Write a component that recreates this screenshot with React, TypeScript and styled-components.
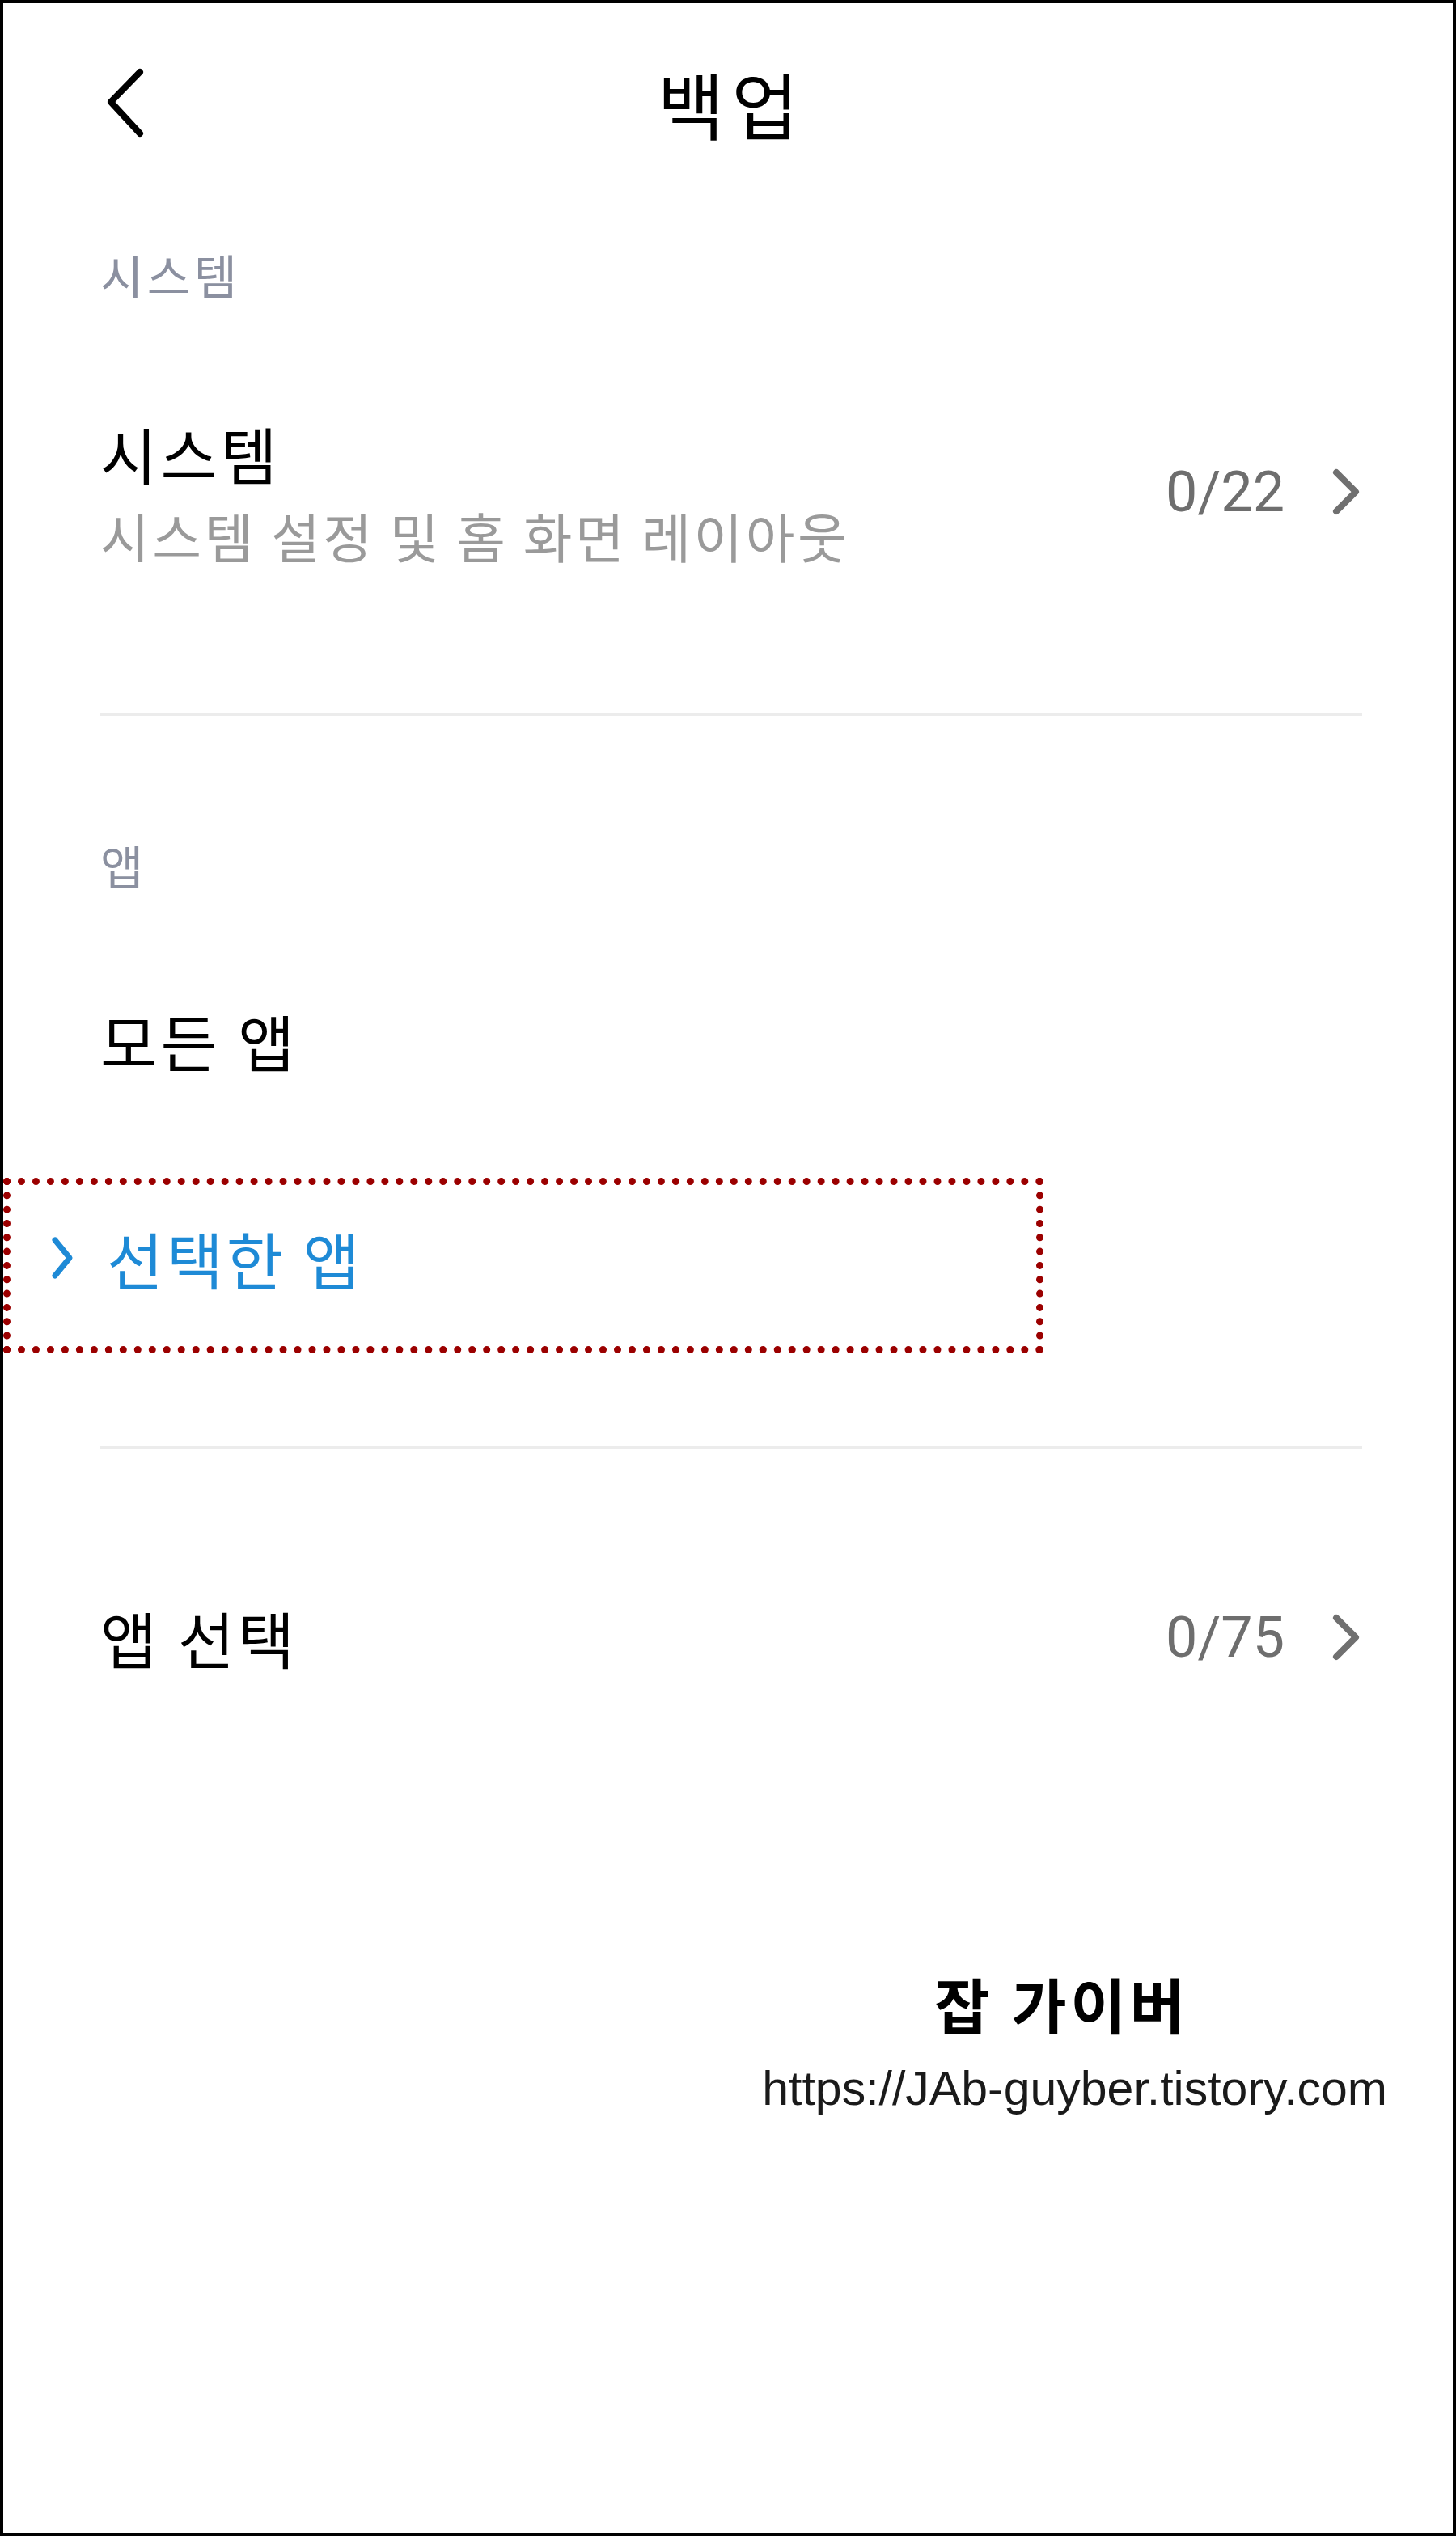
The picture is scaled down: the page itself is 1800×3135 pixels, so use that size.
import React from 'react'
import styled, {createGlobalStyle} from 'styled-components'

const GlobalStyle = createGlobalStyle`
  html, body {
    margin: 0;
    padding: 0;
    background: #fff;
  }
  * {
    box-sizing: border-box;
  }
`

const KR = `"Noto Sans CJK KR", "Noto Sans", sans-serif`

type Entry = { title: string, subtitle?: string, count?: string }

const systemItems: Entry[] = [
    { title: "시스템", subtitle: "시스템 설정 및 홈 화면 레이아웃", count: "0/22" },
]

const BackIcon = () => (
    <svg width="56" height="92" viewBox="0 0 56 92">
        <path d="M46 8 L10 45 L46 84" fill="none" stroke="#000" strokeWidth="8" strokeLinecap="round" strokeLinejoin="round"/>
    </svg>
)

const ChevronIcon = ({ color = "#707070", small = false }: { color?: string, small?: boolean }) => (
    small ? (
        <svg width="30" height="56" viewBox="0 0 30 56">
            <path d="M6 6 L24 28 L6 50" fill="none" stroke={color} strokeWidth="7" strokeLinecap="round" strokeLinejoin="round"/>
        </svg>
    ) : (
        <svg width="40" height="64" viewBox="0 0 40 64">
            <path d="M8 8 L32 32 L8 56" fill="none" stroke={color} strokeWidth="8" strokeLinecap="round" strokeLinejoin="round"/>
        </svg>
    )
)

const CountChevron = ({ count }: { count: string }) => (
    <Trailing>
        <Count>{count}</Count>
        <ChevronIcon/>
    </Trailing>
)

export default function App() {
    return (
        <>
            <GlobalStyle/>
            <Frame>
                <Header>
                    <BackButton type="button" aria-label="뒤로">
                        <BackIcon/>
                    </BackButton>
                    <Title>백업</Title>
                    <span/>
                </Header>

                <Content>
                    <SectionLabel $top={60}>시스템</SectionLabel>
                    {systemItems.map(item => (
                        <Row key={item.title} $top={154}>
                            <TextColumn>
                                <ItemTitle>{item.title}</ItemTitle>
                                <ItemSubtitle>{item.subtitle}</ItemSubtitle>
                            </TextColumn>
                            {item.count && <CountChevron count={item.count}/>}
                        </Row>
                    ))}
                    <Divider $top={188}/>

                    <SectionLabel $top={155}>앱</SectionLabel>
                    <Row $top={150}>
                        <ItemTitle>모든 앱</ItemTitle>
                    </Row>
                    <Highlight>
                        <ChevronIcon color="#1e8ad6" small/>
                        <SelectedTitle>선택한 앱</SelectedTitle>
                    </Highlight>
                    <Divider $top={115}/>

                    <Row $top={195}>
                        <ItemTitle>앱 선택</ItemTitle>
                        <CountChevron count="0/75"/>
                    </Row>

                    <Watermark>
                        <WatermarkName>잡 가이버</WatermarkName>
                        <WatermarkUrl>https://JAb-guyber.tistory.com</WatermarkUrl>
                    </Watermark>
                </Content>
            </Frame>
        </>
    )
}

const Frame = styled.div`
  width: 1800px;
  height: 3135px;
  border: 4px solid #000;
  background: #fff;
  display: flex;
  flex-direction: column;
  overflow: hidden;
`

const Header = styled.header`
  height: 246px;
  display: grid;
  grid-template-columns: 1fr auto 1fr;
  align-items: center;
  padding: 0 123px;
`

const BackButton = styled.button`
  justify-self: start;
  display: flex;
  padding: 0;
  border: none;
  background: transparent;
  cursor: pointer;
`

const Title = styled.h1`
  margin: 0;
  font-family: ${KR};
  font-size: 90px;
  line-height: 1;
  font-weight: 400;
  letter-spacing: 9px;
  padding-left: 9px;
  color: #000;
`

const Content = styled.main`
  display: flex;
  flex-direction: column;
  padding: 0 112px 0 120px;
`

const SectionLabel = styled.div<{ $top: number }>`
  margin-top: ${({ $top }) => $top}px;
  font-family: ${KR};
  font-size: 58px;
  line-height: 1;
  letter-spacing: 4.5px;
  color: #8b90a0;
`

const Row = styled.div<{ $top: number }>`
  margin-top: ${({ $top }) => $top}px;
  display: flex;
  align-items: center;
  justify-content: space-between;
`

const TextColumn = styled.div`
  display: flex;
  flex-direction: column;
  gap: 30px;
`

const ItemTitle = styled.div`
  font-family: ${KR};
  font-size: 76px;
  line-height: 1;
  letter-spacing: 4.5px;
  color: #000;
`

const ItemSubtitle = styled.div`
  font-family: ${KR};
  font-size: 66px;
  line-height: 1;
  color: #9a9a9a;
  letter-spacing: 3.5px;
`

const Trailing = styled.div`
  display: flex;
  align-items: center;
  gap: 56px;
`

const Count = styled.span`
  font-family: Roboto, "Liberation Sans", sans-serif;
  font-size: 70px;
  line-height: 1;
  color: #6e6e6e;
`

const Divider = styled.hr<{ $top: number }>`
  margin: ${({ $top }) => $top}px 0 0;
  border: none;
  height: 3px;
  background: #ececec;
`

const Highlight = styled.div`
  margin: 132px 0 0 -120px;
  width: 1286px;
  border: 9px dotted #9b0000;
  display: flex;
  align-items: center;
  gap: 40px;
  padding: 52px 0 71px 49px;
`

const SelectedTitle = styled.div`
  font-family: ${KR};
  font-size: 76px;
  line-height: 1;
  letter-spacing: 4px;
  color: #1e8ad6;
`

const Watermark = styled.div`
  margin: 377px -31px 0 auto;
  display: flex;
  flex-direction: column;
  align-items: center;
`

const WatermarkName = styled.div`
  font-family: ${KR};
  font-size: 74px;
  line-height: 1;
  font-weight: 700;
  letter-spacing: 5px;
  color: #000;
  padding-right: 32px;
`

const WatermarkUrl = styled.div`
  margin-top: 40px;
  font-family: "Liberation Sans", Arial, sans-serif;
  font-size: 59px;
  line-height: 1;
  color: #1a1a1a;
`
